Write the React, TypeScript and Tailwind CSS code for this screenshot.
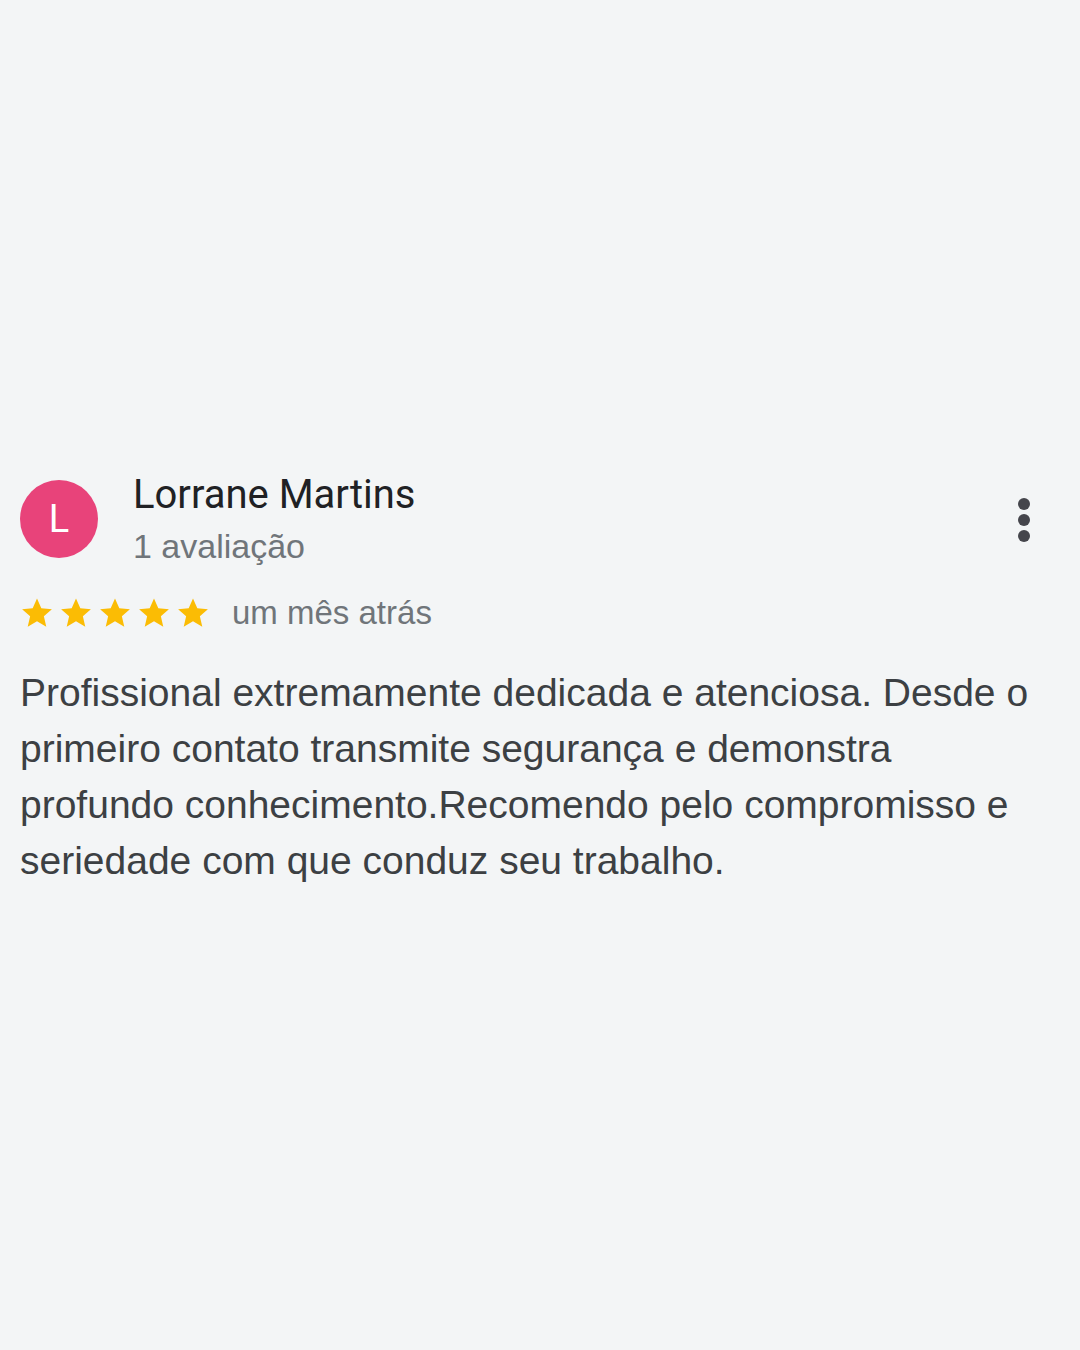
export default function App() {
  return (
    <div className="min-h-[1350px] w-[1080px] bg-[#f3f5f6] pt-[471px]">
      <div className="px-5">
        <div className="flex items-start">
          <div className="mt-[9px] flex h-[78px] w-[78px] shrink-0 items-center justify-center rounded-full bg-[#e8437a] font-['Roboto',sans-serif] text-[38px] text-white">
            L
          </div>
          <div className="ml-[35px] flex-1">
            <p className="font-['Roboto',sans-serif] text-[40px] leading-[48px] text-[#202124]">Lorrane Martins</p>
            <p className="mt-[6px] font-['Liberation_Sans',sans-serif] text-[34px] leading-[42px] text-[#70757a]">1 avaliação</p>
          </div>
          <div className="mr-[30px] mt-[27px] flex flex-col items-center gap-[4px]">
            <span className="h-[12px] w-[12px] rounded-full bg-[#45464c]" />
            <span className="h-[12px] w-[12px] rounded-full bg-[#45464c]" />
            <span className="h-[12px] w-[12px] rounded-full bg-[#45464c]" />
          </div>
        </div>
        <div className="mt-[26px] flex items-center">
          <div className="flex gap-[5px]">
            {[0, 1, 2, 3, 4].map((i) => (
              <svg key={i} viewBox="0 0 24 24" className="h-[34px] w-[34px]">
                <path
                  fill="#fbbc04"
                  d="M12 1.8l3.05 6.9 7.45.7-5.65 4.95 1.7 7.35L12 17.85 5.45 21.7l1.7-7.35L1.5 9.4l7.45-.7z"
                />
              </svg>
            ))}
          </div>
          <span className="ml-[22px] font-['Liberation_Sans',sans-serif] text-[33px] leading-[40px] text-[#70757a]">
            um mês atrás
          </span>
        </div>
        <p className="mt-[32px] font-['Liberation_Sans',sans-serif] text-[39px] leading-[56px] text-[#3c4043]">
          Profissional extremamente dedicada e atenciosa. Desde o<br />
          primeiro contato transmite segurança e demonstra<br />
          profundo conhecimento.Recomendo pelo compromisso e<br />
          seriedade com que conduz seu trabalho.
        </p>
      </div>
    </div>
  );
}
